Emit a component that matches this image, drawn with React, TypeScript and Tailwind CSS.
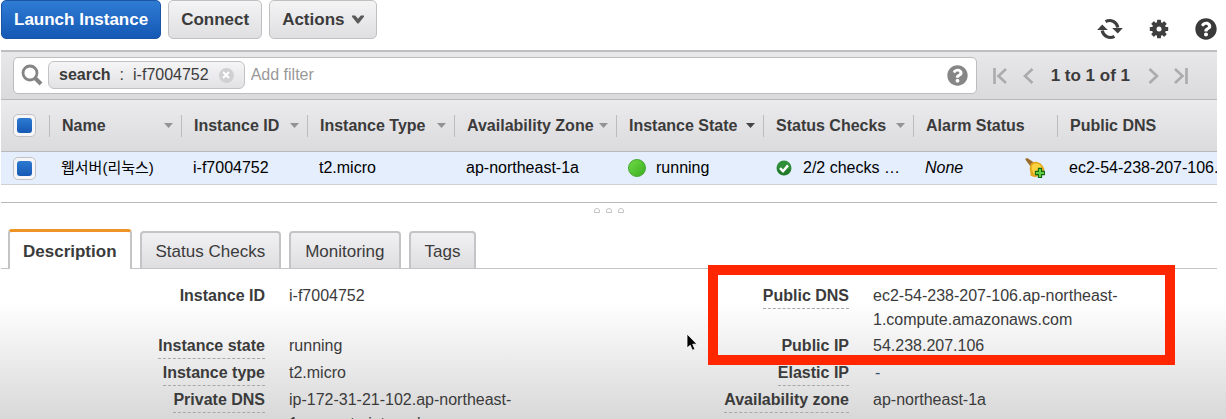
import React from "react";
import { FaQuestionCircle } from "react-icons/fa";

function RefreshIcon() {
  return (
    <svg viewBox="0 0 26 22" className="h-[22px] w-[26px]" fill="none" stroke="#3f3f3f" strokeWidth="3.2">
      <path d="M8.6 3.600A8.300 8.300 0 0 1 20.800 9.500" />
      <path d="M17.400 18.400A8.300 8.300 0 0 1 5.200 12.500" />
      <path d="M15.200 10h10.600l-5 5.400z" fill="#3f3f3f" stroke="none" />
      <path d="M10.800 12H0.200l5-5.400z" fill="#3f3f3f" stroke="none" />
    </svg>
  );
}

function GearIcon() {
  const angles = [0, 45, 90, 135];
  return (
    <svg viewBox="0 0 20 20" className="size-5">
      <g fill="#3f3f3f">
        {angles.map((a) => (
          <rect key={a} x="8" y="0.8" width="4" height="18.4" rx="0.6" transform={`rotate(${a} 10 10)`} />
        ))}
        <circle cx="10" cy="10" r="7" />
      </g>
      <circle cx="10" cy="10" r="2.5" fill="#fff" />
    </svg>
  );
}

function SearchIcon() {
  return (
    <svg viewBox="0 0 22 22" className="size-[22px] shrink-0" fill="none" stroke="#858585">
      <circle cx="9" cy="9" r="7" strokeWidth="2.8" />
      <path d="M14 14l6 6" strokeWidth="4" />
    </svg>
  );
}

function ChevronIcon() {
  return (
    <svg viewBox="0 0 12 9" className="h-[9px] w-3 shrink-0">
      <path d="M0 0.500h3.200L6 3.800 8.800 0.500H12v1.300L6.600 8.500H5.400L0 1.800z" fill="#5a5a5a" />
    </svg>
  );
}

function PageIcon({ d }: { d: string }) {
  return (
    <svg viewBox="0 0 14 16" className="h-4 w-3.5" fill="none" stroke="#ababad" strokeWidth="2.6">
      <path d={d} />
    </svg>
  );
}

function BellIcon() {
  return (
    <svg viewBox="0 0 20 20" className="size-5">
      <path d="M0.300 1.500C0.500 0.300 2 0 3 0.600l6 4-3.500 4z" fill="#9a6c2c" />
      <path d="M5 8C6 4.500 9.500 3.200 13 4.200c3.500 1 5.200 3.800 6.500 7L17 17l-7.200 2.200c-1.200-.4-2.800-1-4.300-1.400C6 14.500 4 11.500 5 8z" fill="#e3a91e" />
      <path d="M6.800 8c1.200-2.800 4.500-3.200 7-1.700 2 1.200 3 3 4.200 4.700l-8.500 6.500C8.200 14 6.200 11.500 6.800 8z" fill="#fbd23f" />
      <path d="M13.400 10.400h3.200v3h3v3.200h-3v3h-3.200v-3h-3v-3.200h3z" fill="#5fd044" stroke="#14660f" strokeWidth="1.1" />
    </svg>
  );
}

function CheckIcon() {
  return (
    <svg viewBox="0 0 16 16" className="size-4 shrink-0">
      <circle cx="8" cy="8" r="7.500" fill="#2f8f38" />
      <path d="M1.200 8.500a6.800 6.800 0 0 0 13.600 0c-4 2-9 2-13.600 0z" fill="#23792c" />
      <path d="M4 8.200l3 3 5-5.800" fill="none" stroke="#fff" strokeWidth="2.400" />
    </svg>
  );
}

function Tick({ label }: { label: string }) {
  return (
    <label className="ml-3 flex size-[23px] items-center justify-center rounded-[5px] border border-[#c2c2c4] bg-[#f6f6f8]">
      <input
        type="checkbox"
        defaultChecked
        aria-label={label}
        className="size-[15px] appearance-none rounded-[3px] bg-white checked:bg-linear-to-b checked:from-[#2d7ad2] checked:to-[#1559b3]"
      />
    </label>
  );
}

type Column = { name: string; width: string; sort?: "idle" | "active" };

const columns: Column[] = [
  { name: "Name", width: "w-[132px]", sort: "idle" },
  { name: "Instance ID", width: "w-[126px]", sort: "idle" },
  { name: "Instance Type", width: "w-[147px]", sort: "idle" },
  { name: "Availability Zone", width: "w-[162px]", sort: "idle" },
  { name: "Instance State", width: "w-[147px]", sort: "active" },
  { name: "Status Checks", width: "w-[150px]", sort: "idle" },
  { name: "Alarm Status", width: "w-[144px]" },
  { name: "Public DNS", width: "" },
];

function HeaderCell({ column }: { column: Column }) {
  return (
    <th scope="col" className={`${column.width} overflow-hidden p-0 text-left font-bold`}>
      <div className="flex h-[22px] items-center justify-between whitespace-nowrap border-l border-[#bcbcbe] pr-2 pl-3">
        {column.name}
        {column.sort && (
          <svg viewBox="0 0 9 5" className="h-[5px] w-[9px] shrink-0">
            <path d="M0 0h9L4.500 5z" fill={column.sort === "active" ? "#444" : "#939395"} />
          </svg>
        )}
      </div>
    </th>
  );
}

function Cell({ children }: { children: React.ReactNode }) {
  return <td className="overflow-hidden whitespace-nowrap p-0 pl-3">{children}</td>;
}

function Term({ children, hint = true }: { children: string; hint?: boolean }) {
  return (
    <dt className="text-right font-bold">
      <span className={hint ? "inline-block border-b border-dashed border-[#a8a8a8]" : "inline-block"}>{children}</span>
    </dt>
  );
}

function Tab({ name, active = false }: { name: string; active?: boolean }) {
  return (
    <button
      type="button"
      role="tab"
      aria-selected={active}
      className={
        active
          ? "-mb-px h-10 rounded-t-[4px] border-x-2 border-t-[3px] border-x-[#c4c4c6] border-t-[#ee9325] bg-white px-[13px] pt-0.5 font-bold"
          : "h-[37px] rounded-t-[4px] border-2 border-b-0 border-[#c4c4c6] bg-linear-to-b from-[#f1f1f3] to-[#dedde0] px-3.5 pt-0.5"
      }
    >
      {name}
    </button>
  );
}

const plainButton =
  "flex h-[39px] items-center rounded-[5px] border border-[#c0c0c2] bg-linear-to-b from-[#f4f4f5] to-[#dfdee1] px-3";

export default function App() {
  return (
    <div className="relative h-screen overflow-hidden bg-[linear-gradient(to_bottom,#fff_0%,#fff_72%,#f4f4f4_80%,#d8d8d8_100%)] pr-[9px] pl-px font-['Liberation_Sans','Noto_Sans_CJK_KR',sans-serif] text-base text-[#3b3b3b]">
      <header className="flex h-[50px] items-start justify-between">
        <div className="flex gap-[7px] text-[17px] font-bold">
          <button
            type="button"
            className="flex h-[39px] items-center rounded-[5px] border border-[#1a56a5] bg-linear-to-b from-[#2f7cd5] to-[#1458b4] px-3 text-white"
          >
            Launch Instance
          </button>
          <button type="button" className={plainButton}>Connect</button>
          <button type="button" className={`${plainButton} gap-2`}>
            Actions
            <ChevronIcon />
          </button>
        </div>
        <div className="flex h-[57px] items-center gap-[26px]">
          <button type="button" aria-label="Refresh"><RefreshIcon /></button>
          <button type="button" aria-label="Settings"><GearIcon /></button>
          <button type="button" aria-label="Help"><FaQuestionCircle className="size-[22px] text-[#3a3a3a]" /></button>
        </div>
      </header>

      <div className="flex h-[50px] items-center border-t-2 border-b border-t-[#bebec0] border-b-[#b9b9bb] bg-linear-to-b from-[#e8e7ea] to-[#dad9dc] pr-[29px] pl-3">
        <div className="-mt-px flex h-[37px] min-w-0 flex-1 items-center rounded-[5px] border border-[#bdbdbf] bg-white pr-2 pl-[7px]">
          <SearchIcon />
          <span className="ml-[5px] flex h-7 items-center whitespace-nowrap rounded-[6px] border border-[#c2c2c4] bg-linear-to-b from-[#f5f5f6] to-[#e2e1e4] px-2.5">
            <b>search</b>
            <span className="mx-[9px]">:</span>
            i-f7004752
            <button type="button" aria-label="Remove filter" className="ml-2.5 flex size-[15px] items-center justify-center rounded-full bg-[#d0d0d2]">
              <svg viewBox="0 0 8 8" className="size-2" stroke="#fff" strokeWidth="2">
                <path d="M1 1l6 6M7 1L1 7" />
              </svg>
            </button>
          </span>
          <input
            type="text"
            aria-label="Add filter"
            placeholder="Add filter"
            className="ml-1.5 min-w-0 flex-1 bg-transparent outline-none placeholder:text-[#999]"
          />
          <button type="button" aria-label="Filter help"><FaQuestionCircle className="size-[21px] text-[#868686]" /></button>
        </div>
        <nav className="ml-4 flex items-center text-[17px] font-bold">
          <button type="button" aria-label="First page"><PageIcon d="M1.500 0v16M13 1L5.500 8l7.500 7" /></button>
          <button type="button" aria-label="Previous page" className="ml-3.5"><PageIcon d="M11.500 1L4 8l7.500 7" /></button>
          <span className="mx-4 whitespace-nowrap">1 to 1 of 1</span>
          <button type="button" aria-label="Next page"><PageIcon d="M3.500 1L11 8l-7.500 7" /></button>
          <button type="button" aria-label="Last page" className="ml-3.5"><PageIcon d="M1 1l7.500 7L1 15M12.500 0v16" /></button>
        </nav>
      </div>

      <table className="w-full table-fixed border-separate border-spacing-0">
        <thead className="bg-linear-to-b from-[#ebeaed] to-[#dbdadd]">
          <tr className="h-[51px]">
            <th scope="col" className="w-12 p-0"><Tick label="Select all" /></th>
            {columns.map((column) => (
              <HeaderCell key={column.name} column={column} />
            ))}
          </tr>
        </thead>
        <tbody className="bg-[#e4eefd] text-black">
          <tr className="h-[34px] [&>td]:border-t [&>td]:border-b [&>td]:border-t-[#b9b9bb] [&>td]:border-b-[#cfd0d4]">
            <td className="p-0"><Tick label="Select instance" /></td>
            <Cell><span className="text-[15px]">웹서버(리눅스)</span></Cell>
            <Cell>i-f7004752</Cell>
            <Cell>t2.micro</Cell>
            <Cell>ap-northeast-1a</Cell>
            <Cell>
              <div className="flex items-center gap-2.5">
                <span className="size-[18px] rounded-full border border-[#43a52a] bg-linear-to-br from-[#6fdb45] to-[#3aae1f]" />
                running
              </div>
            </Cell>
            <Cell>
              <div className="flex items-center gap-[11px] pl-px">
                <CheckIcon />
                2/2 checks …
              </div>
            </Cell>
            <Cell>
              <div className="flex items-center justify-between pr-3">
                <i>None</i>
                <BellIcon />
              </div>
            </Cell>
            <Cell>ec2-54-238-207-106.</Cell>
          </tr>
        </tbody>
      </table>

      <div className="mt-[17px] flex h-[27px] items-start justify-center gap-1.5 border-t border-[#b9b9bb] pt-[5px]">
        <span className="h-[5px] w-1.5 rounded-t-[3px] border border-[#c4c4c4]" />
        <span className="h-[5px] w-1.5 rounded-t-[3px] border border-[#c4c4c4]" />
        <span className="h-[5px] w-1.5 rounded-t-[3px] border border-[#c4c4c4]" />
      </div>

      <div role="tablist" className="flex h-10 items-end gap-2 border-b border-[#c4c4c6] pl-[7px] text-[17px]">
        <Tab name="Description" active />
        <Tab name="Status Checks" />
        <Tab name="Monitoring" />
        <Tab name="Tags" />
      </div>

      <dl className="mt-[15px] grid grid-cols-[264px_272fr_264px_344fr] gap-x-6 leading-6 [&>*]:min-h-[27px]">
        <Term hint={false}>Instance ID</Term>
        <dd>i-f7004752</dd>
        <Term>Public DNS</Term>
        <dd className="pb-[2px]">ec2-54-238-207-106.ap-northeast-1.compute.amazonaws.com</dd>
        <Term>Instance state</Term>
        <dd>running</dd>
        <Term>Public IP</Term>
        <dd>54.238.207.106</dd>
        <Term>Instance type</Term>
        <dd>t2.micro</dd>
        <Term>Elastic IP</Term>
        <dd className="pl-0.5 text-[#36536f]">-</dd>
        <Term>Private DNS</Term>
        <dd>ip-172-31-21-102.ap-northeast-1.compute.internal</dd>
        <Term>Availability zone</Term>
        <dd>ap-northeast-1a</dd>
      </dl>

      <div className="pointer-events-none absolute top-[265px] left-[708px] h-[100px] w-[467px] border-10 border-[#ff2600]" />
      <svg viewBox="0 0 12 18" className="pointer-events-none absolute top-[333px] left-[686px] h-[18px] w-3">
        <path d="M1 1v14l3.200-2.800 2.200 5 2.500-1-2.200-5h4.300z" fill="#000" stroke="#fff" strokeWidth="0.800" />
      </svg>
    </div>
  );
}
